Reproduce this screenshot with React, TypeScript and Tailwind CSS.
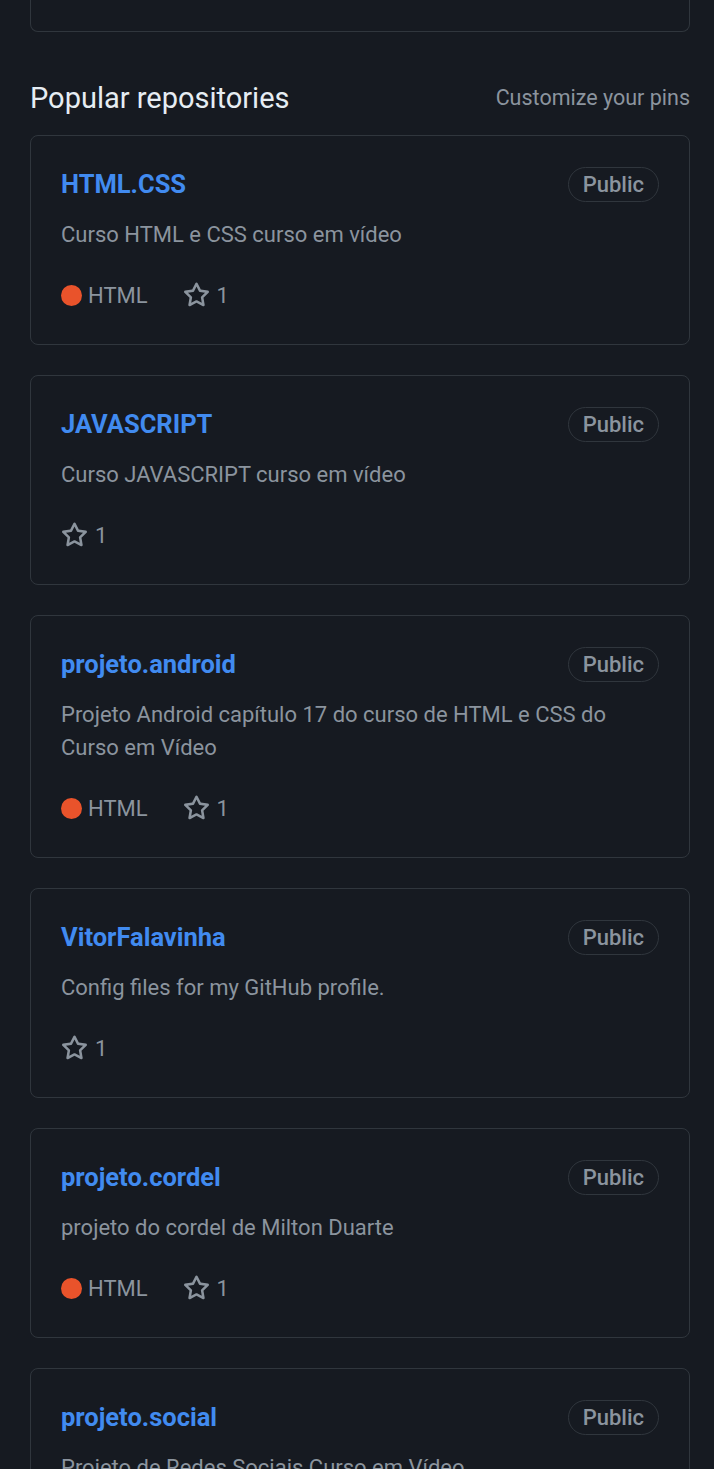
type Repo = {
  name: string;
  description: string;
  language?: string;
  stars: number;
};

const repos: Repo[] = [
  { name: 'HTML.CSS', description: 'Curso HTML e CSS curso em vídeo', language: 'HTML', stars: 1 },
  { name: 'JAVASCRIPT', description: 'Curso JAVASCRIPT curso em vídeo', stars: 1 },
  {
    name: 'projeto.android',
    description: 'Projeto Android capítulo 17 do curso de HTML e CSS do Curso em Vídeo',
    language: 'HTML',
    stars: 1,
  },
  { name: 'VitorFalavinha', description: 'Config files for my GitHub profile.', stars: 1 },
  { name: 'projeto.cordel', description: 'projeto do cordel de Milton Duarte', language: 'HTML', stars: 1 },
  { name: 'projeto.social', description: 'Projeto de Redes Sociais Curso em Vídeo', language: 'HTML', stars: 1 },
];

function StarIcon() {
  return (
    <svg viewBox="0 0 16 16" className="w-[27px] h-[27px]" fill="#8b949e">
      <path d="M8 .25a.75.75 0 0 1 .673.418l1.882 3.815 4.21.612a.75.75 0 0 1 .416 1.279l-3.046 2.97.719 4.192a.751.751 0 0 1-1.088.791L8 12.347l-3.766 1.98a.75.75 0 0 1-1.088-.79l.72-4.194L.818 6.374a.75.75 0 0 1 .416-1.28l4.21-.611L7.327.668A.75.75 0 0 1 8 .25Zm0 2.445L6.615 5.5a.75.75 0 0 1-.564.41l-3.097.45 2.24 2.184a.75.75 0 0 1 .216.664l-.528 3.084 2.769-1.456a.75.75 0 0 1 .698 0l2.77 1.456-.53-3.084a.75.75 0 0 1 .216-.664l2.24-2.183-3.096-.45a.75.75 0 0 1-.564-.41L8 2.694Z" />
    </svg>
  );
}

function RepoCard({ repo }: { repo: Repo }) {
  return (
    <div className="border border-[#30363d] rounded-[8px] px-[30px] pt-[30px] pb-[32px]">
      {/* Title + visibility badge */}
      <div className="flex items-center justify-between h-[36px]">
        <span className="text-[25.5px] font-bold text-[#418bf0] leading-[36px]">{repo.name}</span>
        <span className="border border-[#30363d] rounded-full h-[35px] px-[14px] flex items-center text-[22px] font-medium text-[#8b949e]">
          Public
        </span>
      </div>
      <p className="mt-[16px] text-[22px] leading-[33px] text-[#8b949e]">{repo.description}</p>
      {/* Meta */}
      <div className="mt-[28px] h-[33px] flex items-center text-[22px] text-[#8b949e]">
        {repo.language && (
          <span className="flex items-center mr-[35px]">
            <span className="inline-block w-[21px] h-[21px] rounded-full bg-[#e9532b] mr-[6px]"></span>
            {repo.language}
          </span>
        )}
        <span className="flex items-center gap-[7px]">
          <StarIcon />
          {repo.stars}
        </span>
      </div>
    </div>
  );
}

export default function App() {
  return (
    <div
      className="min-h-screen bg-[#161a21] pl-[30px] pr-[24px] pb-[40px]"
      style={{ fontFamily: 'Roboto, "Noto Sans", sans-serif' }}
    >
      {/* Previous section card, cut off at the top */}
      <div className="h-[32px] border-x border-b border-[#30363d] rounded-b-[8px]"></div>

      {/* Header */}
      <div className="mt-[46px] h-[40px] flex items-center justify-between">
        <h2 className="text-[29px] text-[#e6edf3] leading-[40px]">Popular repositories</h2>
        <span className="text-[21.5px] text-[#8b949e]">Customize your pins</span>
      </div>

      {/* Repo list */}
      <div className="mt-[17px] flex flex-col gap-[30px]">
        {repos.map((repo) => (
          <RepoCard key={repo.name} repo={repo} />
        ))}
      </div>
    </div>
  );
}
